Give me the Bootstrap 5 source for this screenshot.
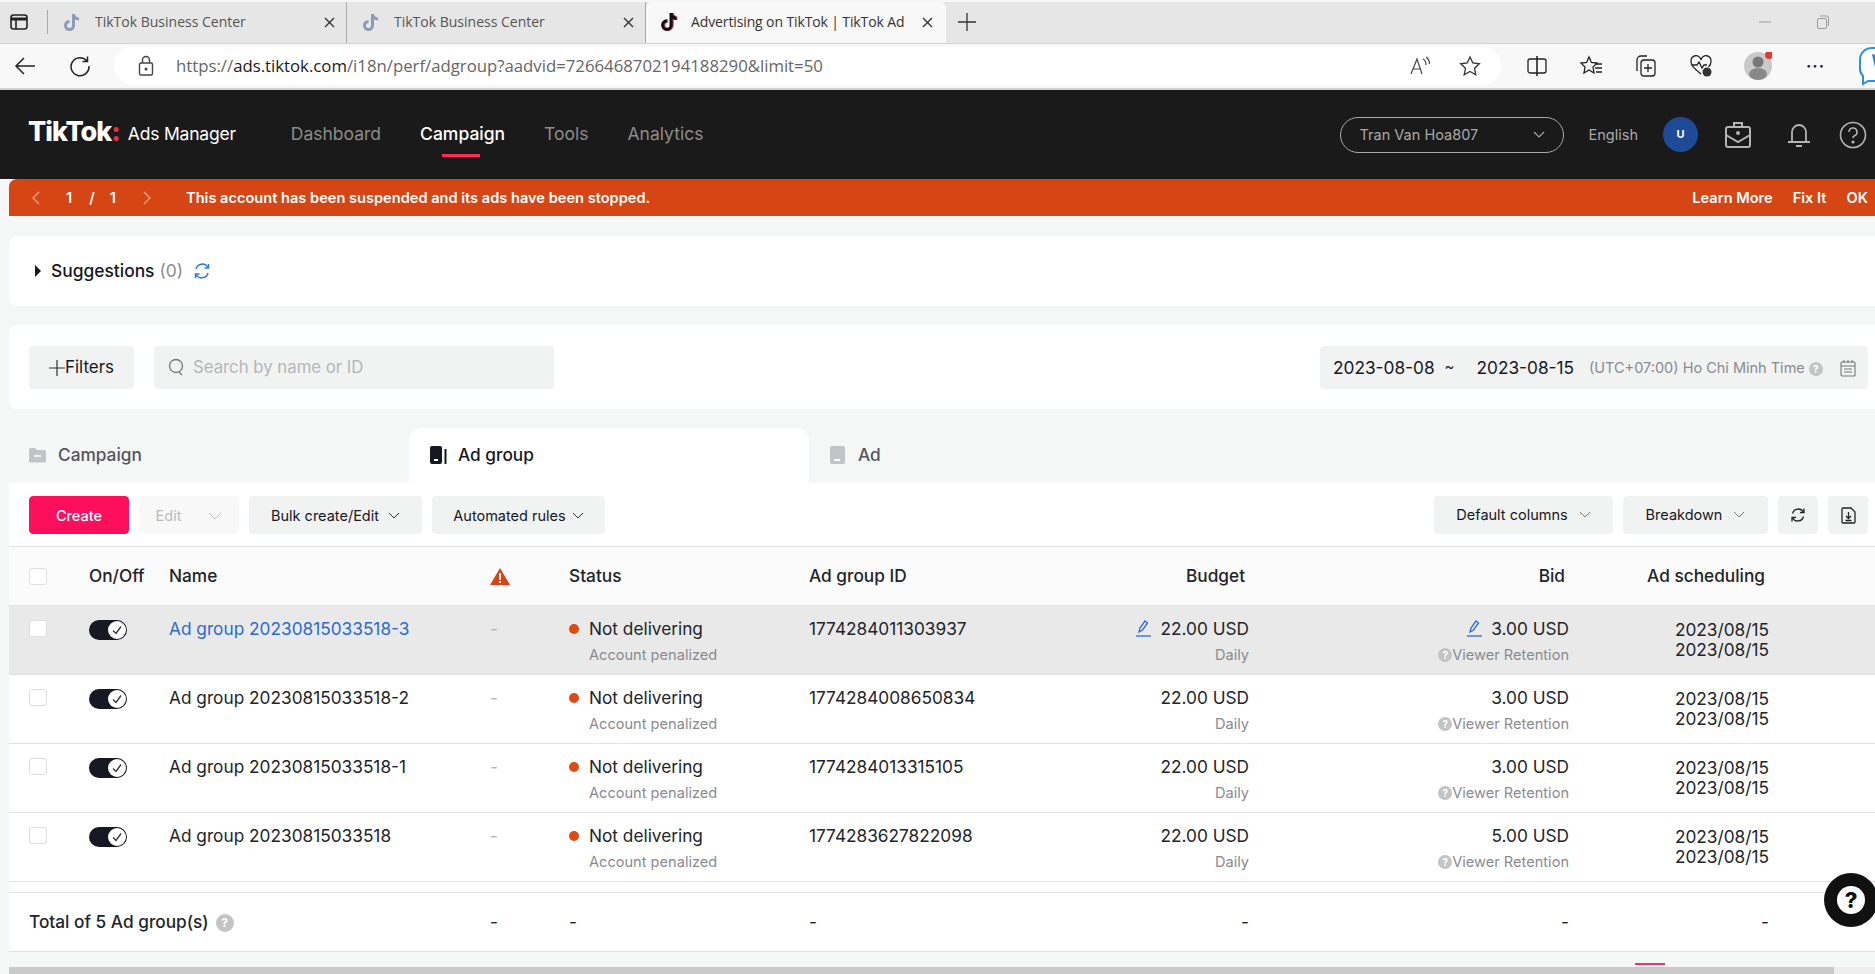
<!DOCTYPE html>
<html lang="en">
<head>
<meta charset="utf-8">
<title>Advertising on TikTok</title>
<link href="https://cdn.jsdelivr.net/npm/bootstrap@5.3.0/dist/css/bootstrap.min.css" rel="stylesheet">
<style>
html,body{height:974px;overflow:hidden}
body{font-family:Inter,"Liberation Sans",sans-serif;background:#f5f6f6;color:#161823;font-size:17.25px;position:relative}
svg{display:block;flex:none}
/* browser chrome */
.tabstrip{height:42px;margin-top:2px;background:#e6e6e6;border-bottom:1px solid #d2d2d2;font-family:"Open Sans","Noto Sans",sans-serif;font-size:14px;color:#555;padding-bottom:2px}
.sideicon{width:48px;padding-left:10px;border-right:1px solid #aaa;height:24px}
.brtab{width:299px;height:41px;padding-left:15px;gap:15px;border-right:1px solid #aaa;flex:none;margin-bottom:-2px}
.brtab.live{background:#f8f8f8;border-right:0;border-radius:8px 8px 0 0;width:300px;color:#333;margin-top:-1px;height:42px;gap:13px;padding-left:14px}
.brtab .tabname{width:213px;overflow:hidden;white-space:nowrap;margin-top:-2px}
.brtab.live .tabname{width:217px;letter-spacing:-.12px}
.tabplus{margin-left:10px}
.winbtns{gap:44px;padding-right:45px}
.addr{height:46px;background:#f8f8f8;border-bottom:2px solid #cfcfcf;padding-left:14px;overflow:hidden}
.reloadicon{margin-left:33px}
.urlpill{width:1387px;height:38px;margin-left:23px;background:#fff;border-radius:19px;padding:0 20px 0 24px;font-family:"Open Sans","Noto Sans",sans-serif;font-size:16.75px;color:#666;flex:none}
.urlpill b{font-weight:400;color:#1b1b1b}
.urltext{margin-left:22px}
.pillicons{gap:28px}
.tool-gap{gap:31px;margin-left:25px;flex:none}
.morebtn{font-size:16px;letter-spacing:1px;color:#222;font-weight:700;width:24px;margin-left:3px}
.bingicon{margin-left:-3px}
/* header */
.adhead{height:89px;background:#1a1a1a;padding:0 8px 0 28px;color:#fff}
.brandmark{font-weight:800;font-size:27px;letter-spacing:-1px;line-height:1;margin-top:-6px}
.brandname{font-size:17.5px;margin-left:8px;width:163px;letter-spacing:-.2px}
.topnav{gap:39px;color:#8c8c8c;font-size:17.5px}
.topnav .on{color:#fff;font-weight:500;position:relative}
.topnav .on::after{content:"";position:absolute;left:22px;width:38px;height:3px;bottom:-9px;background:#fe2c55}
.acct{width:224px;height:36px;border:1px solid #aaa;border-radius:18px;padding:0 18px 0 19px;font-size:14.5px;color:#a9a9a9}
.lang{font-size:14.5px;color:#a9a9a9;margin:0 25px 0 25px}
.avatar{width:35px;height:35px;border-radius:50%;background:#1d4b97;color:#fff;font-size:11px;font-weight:700}
.casegap{margin-left:26px}
.bellgap{margin-left:34px}
.helpgap{margin-left:27px}
/* banner */
.alertbar{height:37px;margin-left:9px;background:#d64514;border-radius:8px 0 0 0;color:#fff;font-size:14.6px;font-weight:600;padding:2px 7px 0 23px}
.pager{width:154px}
.pg1{margin-left:26px}
.pg2{margin-left:17px}
.pg3{margin-left:15px}
.pg4{margin-left:27px}
.bannerlinks{gap:20px}
/* cards */
.sheet{background:#fff;margin-left:9px;border-radius:8px 0 0 8px}
.suggest{height:70px;margin-top:20px;padding:0 0 0 25px;font-size:17.4px;font-weight:500}
.suggest i{font-style:normal;color:#8a8b91;font-weight:400;margin-left:5px}
.suggest .me-2{margin-right:9px!important}
.refreshgap{margin-left:10px}
.filterbar{height:84px;margin-top:19px;padding:0 7px 0 20px}
.grey-btn.btn{--bs-btn-bg:#f1f2f2;--bs-btn-border-color:#f1f2f2;--bs-btn-color:#161823;--bs-btn-hover-bg:#f1f2f2;--bs-btn-hover-border-color:#f1f2f2;--bs-btn-border-radius:4px;--bs-btn-padding-x:0;--bs-btn-padding-y:0;--bs-btn-font-size:14.5px}
.filterbtn.btn{width:105px;height:43px;--bs-btn-font-size:17px;padding-top:2px}
.searchbox{width:400px;height:43px;margin-left:20px;background:#f1f2f2;border-radius:4px;padding:1px 0 0 14px;font-size:16.75px;color:#b5b6ba;gap:8px}
.daterange{width:548px;height:43px;background:#f1f2f2;border-radius:4px;padding:1px 12px 0 13px;font-size:17.25px}
.tz{font-size:14.5px;color:#8a8b91;margin-left:15px}
.dsep{margin:0 16px 0 10px;font-size:15px}
.date2{margin-left:6px}
.tzhint{margin-left:4px;margin-top:2px}
/* tabs */
.tabrow{height:55px;margin-top:19px;margin-left:9px;font-size:17.25px;font-weight:500;color:#54555c}
.objtab{width:400px;padding:0 0 1px 20px;gap:12px;border-radius:12px 12px 0 0}
.objtab.on{background:#fff;color:#161823;padding-left:21px;gap:11px}
.objtab.last{padding-left:21px;gap:13px}
.actionbar{height:64px;padding:1px 7px 0 20px;border-bottom:1px solid #e3e3e3;border-radius:0;column-gap:10px}
.actionbar .btn{height:38px}
.actionbar .nudge{padding-top:2px}
.actionbar .createbtn{padding-top:8px}
.createbtn.btn{--bs-btn-bg:#fe0f5e;--bs-btn-border-color:#fe0f5e;--bs-btn-color:#fff;--bs-btn-hover-bg:#fe0f5e;--bs-btn-hover-border-color:#fe0f5e;--bs-btn-hover-color:#fff;--bs-btn-border-radius:4px;--bs-btn-font-size:14.5px;width:100px;font-weight:500}
.editbtn.btn{width:100px;color:#b9babd;background:#f8f8f8;border-color:#f8f8f8;gap:27px}
.bulkbtn.btn{width:173px;gap:9px}
.rulebtn.btn{width:173px;gap:6px}
.colbtn.btn{width:179px;gap:11px}
.breakbtn.btn{width:145px;gap:11px}
.squarebtn.btn{width:40px}
/* table */
.perf{table-layout:fixed;width:1866px;margin:0 0 0 9px;--bs-table-bg:transparent;--bs-table-border-color:#e3e3e3;background:#fff;font-size:17.25px}
.perf td,.perf th{padding:0;vertical-align:top;box-shadow:none}
.perf thead th{height:58px;vertical-align:middle;font-weight:500;background:#fbfbfb;padding-top:1px}
.perf thead th:first-child{padding-left:20px}
.perf tbody td:first-child{padding-left:20px}
.perf .cell-top{padding-top:12px}
.perf .rowitem{height:69px}
.perf .selrow td{background:#e9e9e9}
.perf .r{text-align:right}
.perf .spacer td{height:11px}
.perf .totalrow td{height:59px;vertical-align:middle;padding-top:1px}
.perf .tick{width:18px;height:17px;border-color:#dedede;border-radius:3px;display:block;margin:2px 0 0}
.perf thead .tick{margin:0}
.onoff{width:38px;height:20px;border-radius:10px;background:#161823;position:relative;display:block;margin-top:2px}
.onoff svg{position:absolute;right:1px;top:1px}
.adlink{color:#2a6bd6}
.ln{line-height:22px}
.subln{font-size:14.6px;line-height:20px;color:#8a8b91;margin-top:5px}
.statusdot{width:10px;height:10px;border-radius:50%;background:#dd4a12;margin-right:10px}
.pad-st{padding-left:20px}
.dashmark{color:#b4b4b4}
.pencil{display:inline-block;vertical-align:-2px;margin-right:9px}
.hint{display:inline-block;width:14px;height:14px;border-radius:50%;background:#c4c4c4;color:#fff;font-size:10px;line-height:14px;text-align:center;vertical-align:1px;font-weight:700}
.hint.big{width:18px;height:18px;line-height:18px;font-size:12px;margin-left:2px}
.datepair{line-height:20px;padding-top:2px}
.c1,.c2{width:80px}.c3{width:321px}.c4{width:79px}.c5,.c6{width:240px}.c7,.c9{width:200px}.c8{width:320px}.c10{width:106px}
.hbar{height:9px;margin:15px 0 0 9px;background:#c9c9c9;position:relative}
.hbar::after{content:"";position:absolute;left:1825px;top:0;right:0;bottom:0;background:#eee}
.pinkdash{position:absolute;left:1635px;top:963px;width:30px;height:2px;background:#e8356d}
.helpfab{position:absolute;left:1824px;top:873px;width:54px;height:54px;border-radius:50%;background:#111}
.helpfab span{width:28px;height:28px;border-radius:50%;background:#fff;color:#111;font-size:22px;font-weight:800;line-height:28px;text-align:center;display:block}
</style>
</head>
<body>
<div class="tabstrip d-flex align-items-center">
  <div class="sideicon d-flex align-items-center"><svg width="18" height="18" viewBox="0 0 18 18" fill="none" stroke="#222" stroke-width="1.6"><rect x="1" y="2" width="16" height="14" rx="2.5"/><path d="M1 6h16" stroke-width="3"/><path d="M6 6v10"/></svg></div>
  <div class="brtab d-flex align-items-center">
    <svg width="17" height="19" viewBox="0 0 17 19"><path d="M9 1h3c.2 2 1.500 3.300 4 3.500v3c-1.600 0-2.900-.5-4-1.200V12.500a5.500 5.500 0 1 1-5.500-5.500v3a2.500 2.500 0 1 0 2.500 2.500z" fill="#8d9bb5"/></svg>
    <span class="tabname">TikTok Business Center</span>
    <svg width="13" height="13" viewBox="0 0 13 13" stroke="#333" stroke-width="1.4"><path d="M2 2l9 9M11 2l-9 9"/></svg>
  </div>
  <div class="brtab d-flex align-items-center">
    <svg width="17" height="19" viewBox="0 0 17 19"><path d="M9 1h3c.2 2 1.500 3.300 4 3.500v3c-1.600 0-2.900-.5-4-1.200V12.500a5.500 5.500 0 1 1-5.500-5.500v3a2.500 2.500 0 1 0 2.500 2.500z" fill="#8d9bb5"/></svg>
    <span class="tabname">TikTok Business Center</span>
    <svg width="13" height="13" viewBox="0 0 13 13" stroke="#333" stroke-width="1.4"><path d="M2 2l9 9M11 2l-9 9"/></svg>
  </div>
  <div class="brtab live d-flex align-items-center">
    <svg width="18" height="20" viewBox="0 0 17 19"><path d="M10 1h3c.2 2 1.500 3.300 3.500 3.500v3c-1.600 0-2.500-.5-3.500-1.200V12.500a5.500 5.500 0 1 1-5.500-5.500v3a2.500 2.500 0 1 0 2.500 2.500z" fill="#fe2c55"/><path d="M9 1h3c.2 2 1.500 3.300 3.500 3.500v3c-1.600 0-2.500-.5-3.500-1.200V12.500a5.500 5.500 0 1 1-5.500-5.500v3a2.500 2.500 0 1 0 2.500 2.500z" fill="#111"/></svg>
    <span class="tabname">Advertising on TikTok | TikTok Ad</span>
    <svg width="13" height="13" viewBox="0 0 13 13" stroke="#333" stroke-width="1.4"><path d="M2 2l9 9M11 2l-9 9"/></svg>
  </div>
  <svg class="tabplus" width="22" height="22" viewBox="0 0 22 22" stroke="#333" stroke-width="1.3"><path d="M11 2v18M2 11h18"/></svg>
  <div class="ms-auto winbtns d-flex align-items-center">
    <svg width="14" height="14" viewBox="0 0 14 14" stroke="#999"><path d="M1 7h12"/></svg>
    <svg width="14" height="14" viewBox="0 0 14 14" fill="none" stroke="#999"><rect x="1.500" y="3.500" width="9" height="10" rx="1.500"/><path d="M4 1h6.500A2 2 0 0 1 12.500 3v8"/></svg>
  </div>
</div>
<div class="addr d-flex align-items-center">
  <svg width="22" height="20" viewBox="0 0 22 20" fill="none" stroke="#222" stroke-width="1.5"><path d="M21 10H2M10 2l-8 8 8 8"/></svg>
  <svg class="reloadicon" width="22" height="22" viewBox="0 0 22 22" fill="none" stroke="#222" stroke-width="1.5"><path d="M18 6a9 9 0 1 0 2 5"/><path d="M18.500 1.500V6.500H13.500"/></svg>
  <div class="urlpill d-flex align-items-center">
    <svg width="16" height="22" viewBox="0 0 16 22" fill="none" stroke="#444" stroke-width="1.400"><rect x="1.500" y="8" width="13" height="12" rx="1.500"/><path d="M4.500 8V5a3.500 3.500 0 0 1 7 0v3"/><circle cx="8" cy="14" r=".8" fill="#444"/></svg>
    <span class="urltext">https://<b>ads.tiktok.com</b>/i18n/perf/adgroup?aadvid=7266468702194188290&amp;limit=50</span>
    <div class="ms-auto pillicons d-flex align-items-center">
      <svg width="22" height="22" viewBox="0 0 22 22" fill="none" stroke="#444" stroke-width="1.200"><path d="M2 19L8 4l5 15M4.500 14h7"/><path d="M14 4c2 1 3 3 3 6M17 2c2.500 2 3.500 4.500 3.500 7"/></svg>
      <svg width="22" height="22" viewBox="0 0 22 22" fill="none" stroke="#333" stroke-width="1.300"><path d="M11 2l2.800 6 6.500.8-4.800 4.400 1.300 6.500L11 16.500l-5.800 3.200 1.300-6.500L1.700 8.800 8.200 8z"/></svg>
    </div>
  </div>
  <div class="tool-gap d-flex align-items-center">
    <svg width="22" height="22" viewBox="0 0 22 22" fill="none" stroke="#222" stroke-width="1.300"><rect x="2" y="4" width="18" height="14" rx="2"/><path d="M11 1v20" stroke-width="1.600"/></svg>
    <svg width="24" height="22" viewBox="0 0 24 22" fill="none" stroke="#222" stroke-width="1.300"><path d="M10 2l2.400 5.500 5.600.6-4 3.900 1 6-5-3-5 3 1-6-4-3.900 5.600-.6z"/><path d="M16 13h7M17 17h6M16 9h7"/></svg>
    <svg width="24" height="24" viewBox="0 0 24 24" fill="none" stroke="#222" stroke-width="1.300"><rect x="7" y="6" width="14" height="16" rx="3"/><path d="M13 2H7a4 4 0 0 0-4 4v11M14 10v8M10 14h8"/></svg>
    <svg width="24" height="24" viewBox="0 0 24 24" fill="none" stroke="#222" stroke-width="1.300"><path d="M12 20C6 15 2 12 2 7.500A5 5 0 0 1 12 6a5 5 0 0 1 10 1.500c0 2-1 4-2.500 5.500"/><path d="M3 11h5l2-3 3 6 2-3h3"/><circle cx="18" cy="18" r="4.500" fill="#333" stroke="none"/></svg>
    <svg width="28" height="28" viewBox="0 0 28 28"><circle cx="14" cy="14" r="14" fill="#c9c9c9"/><circle cx="14" cy="10" r="5.500" fill="#777"/><ellipse cx="14" cy="22" rx="9" ry="6" fill="#888"/><circle cx="25" cy="3" r="4" fill="#e8392d"/></svg>
    <span class="lh-1 morebtn">···</span>
    <svg class="bingicon" width="28" height="42" viewBox="0 0 28 42"><path d="M14 3h14v33H10l-5 3v-8C3 29 2 27 2 24V15C2 8 7 3 14 3z" fill="#fff" stroke="#2d8de0" stroke-width="2"/><path d="M14 9l14 5v16l-9 1z" fill="#2f6fd6"/></svg>
  </div>
</div>
<header class="adhead d-flex align-items-center">
  <span class="brandmark">TikTok<span class="text-danger">:</span></span>
  <span class="brandname">Ads Manager</span>
  <nav class="topnav d-flex"><span>Dashboard</span><span class="on">Campaign</span><span>Tools</span><span>Analytics</span></nav>
  <div class="ms-auto d-flex align-items-center">
    <div class="acct d-flex align-items-center justify-content-between"><span>Tran Van Hoa807</span><svg width="12" height="8" viewBox="0 0 12 8" fill="none" stroke="#aaa" stroke-width="1.100"><path d="M1 1l5 5 5-5"/></svg></div>
    <span class="lang">English</span>
    <div class="avatar d-flex align-items-center justify-content-center">U</div>
    <svg class="casegap" width="28" height="28" viewBox="0 0 28 28" fill="none" stroke="#b4b4b4" stroke-width="2"><rect x="2" y="6" width="24" height="20" rx="2"/><path d="M10 6V2h8v4M2 14l12 7 12-7"/><circle cx="14" cy="12" r="1" fill="#b4b4b4"/></svg>
    <svg class="bellgap" width="26" height="28" viewBox="0 0 26 28" fill="none" stroke="#b4b4b4" stroke-width="1.800"><path d="M6 21V11a7 7 0 0 1 14 0v10M2 21h22M10 25h6"/></svg>
    <svg class="helpgap" width="28" height="28" viewBox="0 0 28 28" fill="none" stroke="#b4b4b4" stroke-width="1.600"><circle cx="14" cy="14" r="12.500"/><path d="M10 11a4 4 0 1 1 5.500 3.700c-1 .5-1.500 1-1.500 2.300"/><circle cx="14" cy="21" r=".8" fill="#b4b4b4"/></svg>
  </div>
</header>
<div class="alertbar d-flex align-items-center">
  <div class="pager d-flex align-items-center">
    <svg width="8" height="14" viewBox="0 0 8 14" fill="none" stroke="#f3a88f" stroke-width="1.200"><path d="M7 1L1 7l6 6"/></svg>
    <span class="pg1">1</span><span class="pg2">/</span><span class="pg3">1</span>
    <svg class="pg4" width="8" height="14" viewBox="0 0 8 14" fill="none" stroke="#f3a88f" stroke-width="1.200"><path d="M1 1l6 6-6 6"/></svg>
  </div>
  <span>This account has been suspended and its ads have been stopped.</span>
  <div class="ms-auto bannerlinks d-flex"><span>Learn More</span><span>Fix It</span><span>OK</span></div>
</div>
<section class="sheet suggest d-flex align-items-center">
  <svg width="8" height="12" viewBox="0 0 8 12" class="me-2"><path d="M1 0l6 6-6 6z" fill="#161823"/></svg>
  <span>Suggestions<i>(0)</i></span>
  <svg class="refreshgap" width="18" height="18" viewBox="0 0 18 18" fill="none" stroke="#2a78e4" stroke-width="1.500"><path d="M3 7a6.500 6.500 0 0 1 12-1.500M15 11a6.500 6.500 0 0 1-12 1.500"/><path d="M15.500 2v4h-4M2.500 16v-4h4"/></svg>
</section>
<section class="sheet filterbar d-flex align-items-center">
  <button type="button" class="btn grey-btn filterbtn d-flex align-items-center justify-content-center"><svg width="16" height="16" viewBox="0 0 16 16" stroke="#333" stroke-width="1.200"><path d="M8 0v16M0 8h16"/></svg>Filters</button>
  <div class="searchbox d-flex align-items-center">
    <svg width="17" height="19" viewBox="0 0 17 19" fill="none" stroke="#777" stroke-width="1.300"><circle cx="8" cy="8" r="6.500"/><path d="M11 14l3 3"/></svg>
    <span>Search by name or ID</span>
  </div>
  <div class="daterange ms-auto d-flex align-items-center">
    <span>2023-08-08</span><span class="dsep">~</span><span class="date2">2023-08-15</span>
    <span class="tz">(UTC+07:00) Ho Chi Minh Time</span>
    <span class="hint tzhint">?</span>
    <svg class="ms-auto" width="16" height="18" viewBox="0 0 16 18" fill="none" stroke="#777" stroke-width="1.100"><rect x="1" y="3" width="14" height="14" rx="1"/><path d="M1 7h14M4 1v3M8 1v3M12 1v3M4 10h8M4 13h8"/></svg>
  </div>
</section>
<div class="tabrow d-flex">
  <div class="objtab d-flex align-items-center"><svg width="17" height="16" viewBox="0 0 17 16"><path d="M0 2.500A1.500 1.500 0 0 1 1.500 1H6l2 2h7.500A1.500 1.500 0 0 1 17 4.500V14a1.500 1.500 0 0 1-1.500 1.500h-14A1.500 1.500 0 0 1 0 14z" fill="#c2c3c6"/><path d="M5 9h7" stroke="#fff" stroke-width="1.500"/></svg>Campaign</div>
  <div class="objtab on d-flex align-items-center"><svg width="17" height="18" viewBox="0 0 17 18"><rect x="0" y="0" width="12" height="18" rx="2" fill="#161823"/><rect x="4" y="13" width="4" height="2" fill="#fff"/><rect x="14.500" y="3" width="2" height="15" fill="#161823"/></svg>Ad group</div>
  <div class="objtab last d-flex align-items-center"><svg width="15" height="18" viewBox="0 0 15 18"><rect width="15" height="18" rx="2" fill="#c2c3c6"/><rect x="4" y="13" width="6" height="2" fill="#fff"/></svg>Ad</div>
</div>
<section class="sheet actionbar d-flex align-items-center">
  <button type="button" class="btn createbtn">Create</button>
  <button type="button" class="btn grey-btn editbtn nudge d-flex align-items-center justify-content-center">Edit<svg width="14" height="9" viewBox="0 0 14 9" fill="none" stroke="#b9babd"><path d="M1 1l6 6 6-6"/></svg></button>
  <button type="button" class="btn grey-btn bulkbtn nudge d-flex align-items-center justify-content-center">Bulk create/Edit<svg width="12" height="8" viewBox="0 0 12 8" fill="none" stroke="#333"><path d="M1 1l5 5 5-5"/></svg></button>
  <button type="button" class="btn grey-btn rulebtn nudge d-flex align-items-center justify-content-center">Automated rules<svg width="12" height="8" viewBox="0 0 12 8" fill="none" stroke="#333"><path d="M1 1l5 5 5-5"/></svg></button>
  <button type="button" class="btn grey-btn colbtn ms-auto d-flex align-items-center justify-content-center">Default columns<svg width="12" height="8" viewBox="0 0 12 8" fill="none" stroke="#777"><path d="M1 1l5 5 5-5"/></svg></button>
  <button type="button" class="btn grey-btn breakbtn d-flex align-items-center justify-content-center">Breakdown<svg width="12" height="8" viewBox="0 0 12 8" fill="none" stroke="#777"><path d="M1 1l5 5 5-5"/></svg></button>
  <button type="button" class="btn grey-btn squarebtn d-flex align-items-center justify-content-center"><svg width="16" height="16" viewBox="0 0 16 16" fill="none" stroke="#222" stroke-width="1.300"><path d="M2.500 6.500A6 6 0 0 1 13.500 5M13.500 9.500A6 6 0 0 1 2.500 11"/><path d="M14 1.500V5.500h-4M2 14.500v-4h4"/></svg></button>
  <button type="button" class="btn grey-btn squarebtn d-flex align-items-center justify-content-center"><svg width="15" height="17" viewBox="0 0 15 17" fill="none" stroke="#222" stroke-width="1.300"><path d="M1 2a1 1 0 0 1 1-1h8l4 4v10a1 1 0 0 1-1 1H2a1 1 0 0 1-1-1z"/><path d="M7.500 5v6M5 9l2.500 2.500L10 9M4.500 13.500h6"/></svg></button>
</section>
<table class="table perf">
  <colgroup><col class="c1"><col class="c2"><col class="c3"><col class="c4"><col class="c5"><col class="c6"><col class="c7"><col class="c8"><col class="c9"><col class="c10"></colgroup>
  <thead>
    <tr>
      <th><input class="form-check-input tick" type="checkbox" aria-label="Select all"></th>
      <th>On/Off</th>
      <th>Name</th>
      <th><svg width="20" height="17" viewBox="0 0 20 17"><path d="M10 0l10 17H0z" fill="#dd4214"/><path d="M9 5h2v7H9zM9 13h2v2H9z" fill="#fff"/></svg></th>
      <th>Status</th>
      <th>Ad group ID</th>
      <th class="r pe-1">Budget</th>
      <th class="r pe-1">Bid</th>
      <th class="r pe-1">Ad scheduling</th>
      <th></th>
    </tr>
  </thead>
  <tbody>
    <tr class="rowitem selrow">
      <td class="cell-top"><input class="form-check-input tick" type="checkbox" aria-label="Select row"></td>
      <td class="cell-top"><span class="onoff"><svg width="18" height="18" viewBox="0 0 18 18"><circle cx="9" cy="9" r="9" fill="#fff"/><path d="M5 9.500l3 3 5-7" fill="none" stroke="#333" stroke-width="1.300"/></svg></span></td>
      <td class="cell-top ln"><span class="adlink">Ad group 20230815033518-3</span></td>
      <td class="cell-top ln dashmark">-</td>
      <td class="cell-top"><div class="d-flex align-items-center ln"><span class="statusdot"></span>Not delivering</div><div class="subln pad-st">Account penalized</div></td>
      <td class="cell-top ln">1774284011303937</td>
      <td class="cell-top r"><div class="ln"><svg class="pencil" width="15" height="17" viewBox="0 0 15 17" fill="none" stroke="#2a6bd6" stroke-width="1.300"><path d="M3 12l1-4 5-7 2.500 2-5 7z"/><path d="M0 16h15"/></svg>22.00 USD</div><div class="subln">Daily</div></td>
      <td class="cell-top r"><div class="ln"><svg class="pencil" width="15" height="17" viewBox="0 0 15 17" fill="none" stroke="#2a6bd6" stroke-width="1.300"><path d="M3 12l1-4 5-7 2.500 2-5 7z"/><path d="M0 16h15"/></svg>3.00 USD</div><div class="subln"><span class="hint">?</span>Viewer Retention</div></td>
      <td class="cell-top r"><div class="datepair">2023/08/15<br>2023/08/15</div></td>
      <td></td>
    </tr>
    <tr class="rowitem">
      <td class="cell-top"><input class="form-check-input tick" type="checkbox" aria-label="Select row"></td>
      <td class="cell-top"><span class="onoff"><svg width="18" height="18" viewBox="0 0 18 18"><circle cx="9" cy="9" r="9" fill="#fff"/><path d="M5 9.500l3 3 5-7" fill="none" stroke="#333" stroke-width="1.300"/></svg></span></td>
      <td class="cell-top ln">Ad group 20230815033518-2</td>
      <td class="cell-top ln dashmark">-</td>
      <td class="cell-top"><div class="d-flex align-items-center ln"><span class="statusdot"></span>Not delivering</div><div class="subln pad-st">Account penalized</div></td>
      <td class="cell-top ln">1774284008650834</td>
      <td class="cell-top r"><div class="ln">22.00 USD</div><div class="subln">Daily</div></td>
      <td class="cell-top r"><div class="ln">3.00 USD</div><div class="subln"><span class="hint">?</span>Viewer Retention</div></td>
      <td class="cell-top r"><div class="datepair">2023/08/15<br>2023/08/15</div></td>
      <td></td>
    </tr>
    <tr class="rowitem">
      <td class="cell-top"><input class="form-check-input tick" type="checkbox" aria-label="Select row"></td>
      <td class="cell-top"><span class="onoff"><svg width="18" height="18" viewBox="0 0 18 18"><circle cx="9" cy="9" r="9" fill="#fff"/><path d="M5 9.500l3 3 5-7" fill="none" stroke="#333" stroke-width="1.300"/></svg></span></td>
      <td class="cell-top ln">Ad group 20230815033518-1</td>
      <td class="cell-top ln dashmark">-</td>
      <td class="cell-top"><div class="d-flex align-items-center ln"><span class="statusdot"></span>Not delivering</div><div class="subln pad-st">Account penalized</div></td>
      <td class="cell-top ln">1774284013315105</td>
      <td class="cell-top r"><div class="ln">22.00 USD</div><div class="subln">Daily</div></td>
      <td class="cell-top r"><div class="ln">3.00 USD</div><div class="subln"><span class="hint">?</span>Viewer Retention</div></td>
      <td class="cell-top r"><div class="datepair">2023/08/15<br>2023/08/15</div></td>
      <td></td>
    </tr>
    <tr class="rowitem">
      <td class="cell-top"><input class="form-check-input tick" type="checkbox" aria-label="Select row"></td>
      <td class="cell-top"><span class="onoff"><svg width="18" height="18" viewBox="0 0 18 18"><circle cx="9" cy="9" r="9" fill="#fff"/><path d="M5 9.500l3 3 5-7" fill="none" stroke="#333" stroke-width="1.300"/></svg></span></td>
      <td class="cell-top ln">Ad group 20230815033518</td>
      <td class="cell-top ln dashmark">-</td>
      <td class="cell-top"><div class="d-flex align-items-center ln"><span class="statusdot"></span>Not delivering</div><div class="subln pad-st">Account penalized</div></td>
      <td class="cell-top ln">1774283627822098</td>
      <td class="cell-top r"><div class="ln">22.00 USD</div><div class="subln">Daily</div></td>
      <td class="cell-top r"><div class="ln">5.00 USD</div><div class="subln"><span class="hint">?</span>Viewer Retention</div></td>
      <td class="cell-top r"><div class="datepair">2023/08/15<br>2023/08/15</div></td>
      <td></td>
    </tr>
    <tr class="spacer"><td colspan="10"></td></tr>
    <tr class="totalrow">
      <td colspan="3"><span class="fw-medium">Total of 5 Ad group(s)</span> <span class="hint big">?</span></td>
      <td>-</td><td>-</td><td>-</td><td class="r">-</td><td class="r">-</td><td class="r">-</td><td></td>
    </tr>
  </tbody>
</table>
<div class="hbar"></div>
<div class="pinkdash"></div>
<div class="helpfab d-flex align-items-center justify-content-center"><span>?</span></div>
<script src="https://cdn.jsdelivr.net/npm/bootstrap@5.3.0/dist/js/bootstrap.bundle.min.js"></script>
</body>
</html>
